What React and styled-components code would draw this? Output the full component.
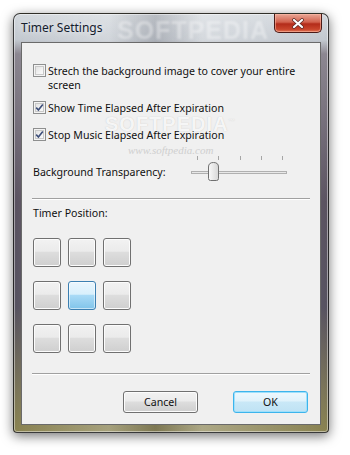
import React, { useState } from 'react'
import styled, { createGlobalStyle } from 'styled-components'

const GlobalStyle = createGlobalStyle`
  html, body {
    margin: 0;
    padding: 0;
    background: #ffffff;
  }
  body {
    font-family: "Noto Sans", "Open Sans", sans-serif;
    font-size: 10.6px;
    color: #111;
  }
`

const Page = styled.div`
  width: 350px;
  height: 455px;
  padding: 13px 0 0 13px;
  box-sizing: border-box;
`

const Window = styled.div`
  position: relative;
  width: 316px;
  box-sizing: border-box;
  border: 1px solid rgba(30, 30, 30, 0.85);
  border-radius: 7px 7px 4px 4px;
  padding: 0 7px 7px 7px;
  background:
    linear-gradient(90deg, rgba(255,255,255,0) 0, rgba(255,255,255,0.25) 30%, rgba(80,80,90,0.2) 45%, rgba(255,255,255,0.3) 60%, rgba(255,255,255,0) 100%),
    linear-gradient(180deg, #d3d8dd 0px, #c2c8cf 26px, #8b8690 40px, #5a5260 45%, #565260 70%, #7a7458 90%, #8a8350 100%);
  box-shadow: 0 3px 12px rgba(0, 0, 0, 0.55), inset 0 0 0 1px rgba(255, 255, 255, 0.45);
`

const TitleBar = styled.div`
  position: relative;
  height: 28px;
  display: flex;
  align-items: flex-start;
  justify-content: space-between;
`

const Title = styled.span`
  margin-top: 7px;
  line-height: 14px;
  font-size: 12px;
  color: #15202e;
  text-shadow: 0 0 6px rgba(255, 255, 255, 0.9);
  position: relative;
  z-index: 1;
`

const TitleMark = styled.span`
  position: absolute;
  left: 96px;
  top: 2px;
  font-family: "Liberation Sans", sans-serif;
  font-weight: bold;
  font-size: 25px;
  letter-spacing: 1px;
  color: rgba(255, 255, 255, 0.35);
  filter: blur(1px);
  pointer-events: none;
`

const CloseButton = styled.button`
  width: 48px;
  height: 19px;
  margin-right: -1px;
  padding: 0;
  border: 1px solid #4a1a16;
  border-top: none;
  border-radius: 0 0 5px 5px;
  display: flex;
  align-items: center;
  justify-content: center;
  background: linear-gradient(180deg, #e9a796 0%, #d2624e 45%, #b32c1a 55%, #c9452c 85%, #e07a5a 100%);
  box-shadow: inset 0 0 0 1px rgba(255, 190, 170, 0.55);
`

const Client = styled.div`
  position: relative;
  background: #f0f0f0;
  border: 1px solid #6a6a6a;
  padding: 0 11px 11px 11px;
  display: flex;
  flex-direction: column;
  overflow: hidden;
`

const CheckRow = styled.label`
  display: flex;
  align-items: flex-start;
  gap: 2px;
  margin-top: ${(p) => p.$top}px;
  line-height: 14px;
`

const Box = styled.span`
  flex: none;
  width: 13px;
  height: 13px;
  box-sizing: border-box;
  margin-top: 0px;
  border: 1px solid #8e8f8f;
  background: linear-gradient(135deg, #dcdcdc 0%, #f4f4f4 60%, #fdfdfd 100%);
  box-shadow: inset 0 0 0 1px #f4f4f4, inset 0 0 0 2px #c9c9c9;
  display: flex;
  align-items: center;
  justify-content: center;
`

const CheckText = styled.span`
  max-width: 258px;
`

const SliderRow = styled.div`
  display: flex;
  align-items: flex-start;
  margin-top: 13px;
  height: 26px;
`

const Label = styled.span`
  line-height: 14px;
  margin-top: ${(p) => p.$top || 0}px;
`

const SliderArt = styled.svg`
  margin-left: auto;
  margin-right: 20px;
  display: block;
`

const Separator = styled.div`
  height: 1px;
  margin: ${(p) => p.$top}px -1px 0 -1px;
  background: #a0a0a0;
  border-bottom: 1px solid #ffffff;
`

const PositionGrid = styled.div`
  display: grid;
  grid-template-columns: repeat(3, 28px);
  grid-auto-rows: 29px;
  column-gap: 7px;
  row-gap: 14px;
  margin-top: 18px;
`

const PositionButton = styled.button`
  padding: 0;
  box-sizing: border-box;
  border: 1px solid ${(p) => (p.$active ? '#3c7fb1' : '#707070')};
  border-radius: 3px;
  background: ${(p) =>
    p.$active
      ? 'linear-gradient(180deg, #eaf6fd 0%, #d9f0fc 45%, #a9daf6 50%, #80c4ea 100%)'
      : 'linear-gradient(180deg, #f2f2f2 0%, #ebebeb 45%, #dddddd 50%, #cfcfcf 100%)'};
  box-shadow: inset 0 0 0 1px ${(p) => (p.$active ? 'rgba(255,255,255,0.55)' : '#fcfcfc')};
`

const ButtonBar = styled.div`
  display: flex;
  justify-content: flex-end;
  gap: 35px;
  margin-top: 16px;
  padding-right: 1px;
`

const PushButton = styled.button`
  width: 75px;
  height: 22px;
  padding: 0;
  box-sizing: border-box;
  font-family: inherit;
  font-size: 10.6px;
  color: #111;
  border-radius: 3px;
  border: 1px solid ${(p) => (p.$default ? '#3cb4ec' : '#707070')};
  background: ${(p) =>
    p.$default
      ? 'linear-gradient(180deg, #eef8fd 0%, #e0f2fb 45%, #c9e8f7 50%, #bfe2f4 100%)'
      : 'linear-gradient(180deg, #f2f2f2 0%, #ebebeb 45%, #dddddd 50%, #cfcfcf 100%)'};
  box-shadow: inset 0 0 0 1px ${(p) => (p.$default ? '#9fe0fb' : '#fcfcfc')};
`

const Watermark = styled.span`
  position: absolute;
  left: ${(p) => p.$left}px;
  top: ${(p) => p.$top}px;
  pointer-events: none;
  white-space: nowrap;
`

const BigMark = styled(Watermark)`
  font-family: "Liberation Sans", sans-serif;
  font-weight: bold;
  font-size: 20px;
  letter-spacing: 1px;
  color: rgba(255, 255, 255, 0.85);
  text-shadow: 0 0 1px rgba(150, 150, 150, 0.5);
`

const SmallMark = styled(Watermark)`
  font-family: "Liberation Serif", serif;
  font-style: italic;
  font-size: 11px;
  color: #cfcfcf;
`

const CheckMark = () => (
  <svg width="9" height="9" viewBox="0 0 9 9">
    <path d="M1.2 4.6 L3.4 7 L7.8 1.4" fill="none" stroke="#3d4e7a" strokeWidth="1.6" />
  </svg>
)

const Checkbox = ({ top, checked, children }) => (
  <CheckRow $top={top}>
    <Box>{checked && <CheckMark />}</Box>
    <CheckText>{children}</CheckText>
  </CheckRow>
)

const Slider = () => (
  <SliderArt width="100" height="26" viewBox="0 0 100 26">
    {[8, 29, 51, 72, 93].map((x) => (
      <rect key={x} x={x} y="1" width="1" height="4" fill="#a6a6a6" />
    ))}
    <rect x="2.5" y="16.5" width="95" height="2" fill="#e8e8e8" stroke="#b0b0b0" />
    <defs>
      <linearGradient id="thumb" x1="0" y1="0" x2="1" y2="0">
        <stop offset="0" stopColor="#fafafa" />
        <stop offset="1" stopColor="#d6d6d6" />
      </linearGradient>
    </defs>
    <path
      d="M19.5 12 Q19.5 7.5 24.5 7.5 Q29.5 7.5 29.5 12 L29.5 23.5 Q29.5 25.5 27.5 25.5 L21.5 25.5 Q19.5 25.5 19.5 23.5 Z"
      fill="url(#thumb)"
      stroke="#707070"
    />
  </SliderArt>
)

const App = () => {
  const [position, setPosition] = useState(4)

  return (
    <Page>
      <GlobalStyle />
      <Window>
        <TitleBar>
          <TitleMark>SOFTPEDIA</TitleMark>
          <Title>Timer Settings</Title>
          <CloseButton aria-label="Close">
            <svg width="14" height="11" viewBox="0 0 14 11">
              <path d="M3 2 L11 9 M11 2 L3 9" stroke="#5a2a25" strokeWidth="3.6" strokeLinecap="round" />
              <path d="M3 2 L11 9 M11 2 L3 9" stroke="#ffffff" strokeWidth="2.2" strokeLinecap="round" />
            </svg>
          </CloseButton>
        </TitleBar>
        <Client>
          <Checkbox top={21}>Strech the background image to cover your entire screen</Checkbox>
          <Checkbox top={9} checked>Show Time Elapsed After Expiration</Checkbox>
          <Checkbox top={13} checked>Stop Music Elapsed After Expiration</Checkbox>
          <SliderRow>
            <Label $top={10}>Background Transparency:</Label>
            <Slider />
          </SliderRow>
          <Separator $top={17} />
          <Label $top={6}>Timer Position:</Label>
          <PositionGrid>
            {Array.from({ length: 9 }, (_, i) => (
              <PositionButton key={i} $active={i === position} onClick={() => setPosition(i)} />
            ))}
          </PositionGrid>
          <Separator $top={20} />
          <ButtonBar>
            <PushButton>Cancel</PushButton>
            <PushButton $default>OK</PushButton>
          </ButtonBar>
          <BigMark $left={83} $top={70}>SOFTPEDIA<sup style={{ fontSize: 6 }}>™</sup></BigMark>
          <SmallMark $left={106} $top={101}>www.softpedia.com</SmallMark>
        </Client>
      </Window>
    </Page>
  )
}

export default App
